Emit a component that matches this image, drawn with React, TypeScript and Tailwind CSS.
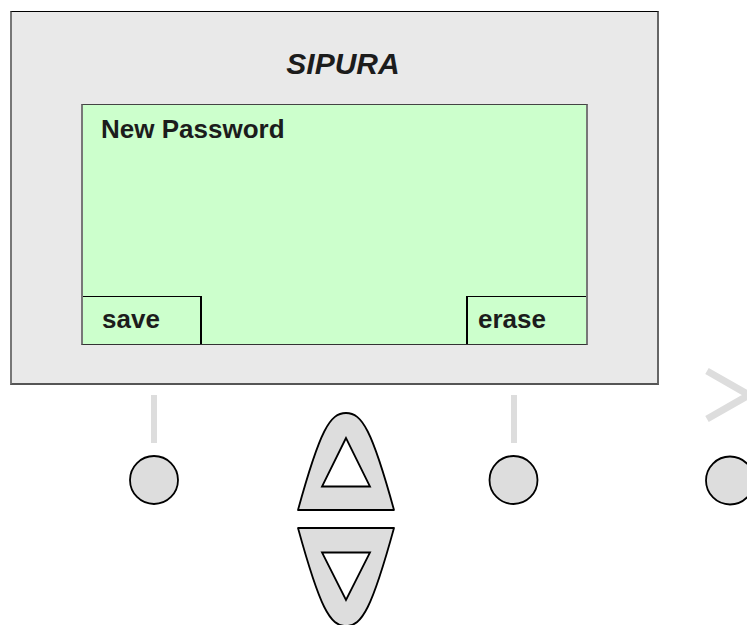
export default function App() {
  return (
    <div className="relative h-[625px] w-[747px] overflow-hidden bg-white font-['Liberation_Sans',Arial,sans-serif] text-[#1c1c1c]">
      {/* phone display panel */}
      <div className="ml-[10px] mt-[11px] flex h-[374px] w-[649px] flex-col border-t border-r-2 border-b-2 border-l-2 border-t-black border-r-[#666] border-b-[#555] border-l-[#777] bg-[#e9e9e9]">
        <div className="mt-[37px] h-[30px] pl-[17px] text-center text-[30px] font-bold italic leading-[30px]">
          SIPURA
        </div>
        <div className="ml-[69px] mt-[25px] flex h-[241px] w-[507px] flex-col border-t border-r-2 border-b border-l-2 border-t-[#444] border-r-[#777] border-b-[#333] border-l-[#777] bg-[#ccffcc]">
          <div className="mt-[11px] pl-[18px] text-[26px] font-bold leading-[26px]">New Password</div>
          <div className="flex-1" />
          <div className="flex items-end justify-between">
            <div className="h-[48px] w-[119px] border-t border-r-2 border-black pl-[19px] pt-[9px] text-[26px] font-bold leading-[26px]">
              save
            </div>
            <div className="h-[48px] w-[120px] border-t border-l-2 border-black pl-[10px] pt-[9px] text-[26px] font-bold leading-[26px]">
              erase
            </div>
          </div>
        </div>
      </div>

      {/* keypad drawing */}
      <svg width="747" height="265" viewBox="0 360 747 265" className="-mt-[25px] block">
        <rect x="151" y="395" width="6" height="48" fill="#dddddd" />
        <rect x="511" y="395" width="6" height="48" fill="#dddddd" />
        <polyline points="707,371 749,395 707,419" fill="none" stroke="#dddddd" strokeWidth="7" />

        <circle cx="154" cy="480" r="24" fill="#dddddd" stroke="#000" strokeWidth="1.8" />
        <circle cx="513.5" cy="480" r="24" fill="#dddddd" stroke="#000" strokeWidth="1.8" />
        <circle cx="730" cy="480.5" r="24" fill="#dddddd" stroke="#000" strokeWidth="1.8" />

        <path
          d="M298 510 C320 430 330 413 346 413 C362 413 372 430 394 510 Z"
          fill="#dddddd"
          stroke="#000"
          strokeWidth="1.8"
          strokeLinejoin="round"
        />
        <polygon points="346,438 322,486.5 370,486.5" fill="#fff" stroke="#000" strokeWidth="1.8" />

        <path
          d="M298 528 L394 528 C372 608 362 626 346 626 C330 626 320 608 298 528 Z"
          fill="#dddddd"
          stroke="#000"
          strokeWidth="1.8"
          strokeLinejoin="round"
        />
        <polygon points="322,552.5 370,552.5 346,600" fill="#fff" stroke="#000" strokeWidth="1.8" />
      </svg>
    </div>
  );
}
